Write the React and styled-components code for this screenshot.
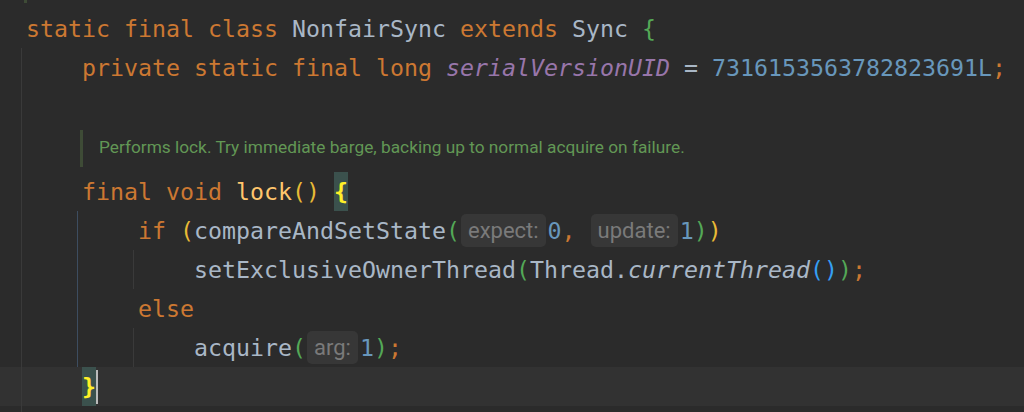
import React from "react";
import styled, { createGlobalStyle } from "styled-components";

const GlobalStyle = createGlobalStyle`
  html, body {
    margin: 0;
    padding: 0;
    background: #2b2b2b;
  }
  body {
    overflow: hidden;
  }
`;

const palette = {
  kw: "#cc7832",
  text: "#a9b7c6",
  field: "#9876aa",
  num: "#6897bb",
  decl: "#ffc66d",
  gold: "#e8ba36",
  green: "#54a857",
  blue: "#359ff4"
};

const guideColor = {
  plain: "#3a3a3a",
  active: "#3d4d60"
};

const Editor = styled.div`
  width: 1024px;
  height: 412px;
  overflow: hidden;
  background: #2b2b2b;
  display: flex;
  flex-direction: column;
  font-family: "DejaVu Sans Mono", "Liberation Mono", monospace;
  font-size: 23.25px;
`;

const Row = styled.div`
  display: flex;
  align-items: stretch;
  flex-shrink: 0;
  height: ${props => props.$height}px;
  padding-left: 21px;
  background: ${props => (props.$current ? "#323232" : "transparent")};
`;

const Filler = styled(Row)`
  flex: 1;
`;

const IndentCell = styled.span`
  width: 56px;
  flex-shrink: 0;
  box-sizing: border-box;
  border-left: 1px solid
    ${props => (props.$guide ? guideColor[props.$guide] : "transparent")};
`;

const Code = styled.span`
  display: flex;
  align-items: center;
  margin-left: 5px;
  white-space: pre;
  line-height: 39px;
`;

const Token = styled.span`
  color: ${props => palette[props.$kind]};
  font-style: ${props => (props.$italic ? "italic" : "normal")};
`;

const MatchedBrace = styled.span`
  align-self: stretch;
  display: flex;
  align-items: center;
  background: #3b514d;
  color: #ffef28;
  font-weight: bold;
`;

const Caret = styled.span`
  width: 2px;
  height: 34px;
  background: #bbbbbb;
`;

const Hint = styled.span`
  display: inline-flex;
  align-items: center;
  height: 33px;
  padding: 0 7px;
  margin: 0 2px 0 1px;
  border-radius: 5px;
  background: #373737;
  color: #7a7a7a;
  font-family: Roboto, "Noto Sans", sans-serif;
  font-size: 22px;
  line-height: 1;
`;

const DocTail = styled.span`
  width: 3px;
  height: 3px;
  margin-left: 3px;
  background: #3e4b36;
`;

const DocBlock = styled.div`
  display: flex;
  align-items: center;
`;

const DocBar = styled.span`
  width: 3px;
  height: 37px;
  margin: 0 16px 1px 3px;
  background: #3e4b36;
`;

const DocText = styled.span`
  padding-bottom: 4px;
  font-family: Roboto, "Noto Sans", sans-serif;
  font-size: 17.3px;
  color: #629755;
`;

// one entry per editor line: guides per indent level, then tokens
const lines = [
  {
    guides: [],
    tokens: [
      ["kw", "static final class "],
      ["text", "NonfairSync "],
      ["kw", "extends "],
      ["text", "Sync "],
      ["green", "{"]
    ]
  },
  {
    guides: ["plain"],
    tokens: [
      ["kw", "private static final long "],
      ["field", "serialVersionUID", true],
      ["text", " = "],
      ["num", "7316153563782823691L"],
      ["kw", ";"]
    ]
  },
  { guides: ["plain"], tokens: [] },
  { doc: "Performs lock. Try immediate barge, backing up to normal acquire on failure." },
  {
    guides: ["plain"],
    tokens: [
      ["kw", "final void "],
      ["decl", "lock"],
      ["gold", "()"],
      ["text", " "],
      ["brace", "{"]
    ]
  },
  {
    guides: ["plain", "active"],
    tokens: [
      ["kw", "if "],
      ["gold", "("],
      ["text", "compareAndSetState"],
      ["green", "("],
      ["hint", "expect:"],
      ["num", "0"],
      ["kw", ", "],
      ["hint", "update:"],
      ["num", "1"],
      ["green", ")"],
      ["gold", ")"]
    ]
  },
  {
    guides: ["plain", "active", "plain"],
    tokens: [
      ["text", "setExclusiveOwnerThread"],
      ["green", "("],
      ["text", "Thread."],
      ["text", "currentThread", true],
      ["blue", "()"],
      ["green", ")"],
      ["kw", ";"]
    ]
  },
  {
    guides: ["plain", "active"],
    tokens: [["kw", "else"]]
  },
  {
    guides: ["plain", "active", "plain"],
    tokens: [
      ["text", "acquire"],
      ["green", "("],
      ["hint", "arg:"],
      ["num", "1"],
      ["green", ")"],
      ["kw", ";"]
    ]
  },
  {
    guides: ["plain"],
    current: true,
    tokens: [["brace", "}"], ["caret", ""]]
  }
];

const renderToken = ([kind, value, italic], i) => {
  if (kind === "hint") return <Hint key={i}>{value}</Hint>;
  if (kind === "brace") return <MatchedBrace key={i}>{value}</MatchedBrace>;
  if (kind === "caret") return <Caret key={i} />;
  return (
    <Token key={i} $kind={kind} $italic={italic}>
      {value}
    </Token>
  );
};

const CodeLine = ({ line }) => {
  if (line.doc) {
    return (
      <Row $height={46}>
        <IndentCell $guide="plain" />
        <DocBlock>
          <DocBar />
          <DocText>{line.doc}</DocText>
        </DocBlock>
      </Row>
    );
  }
  return (
    <Row $height={39} $current={line.current}>
      {line.guides.map((g, i) => (
        <IndentCell key={i} $guide={g} />
      ))}
      <Code>{line.tokens.map(renderToken)}</Code>
    </Row>
  );
};

const App = () => (
  <>
    <GlobalStyle />
    <Editor>
      <Row $height={9}>
        <DocTail />
      </Row>
      {lines.map((line, i) => (
        <CodeLine key={i} line={line} />
      ))}
      <Filler $height={6}>
        <IndentCell $guide="plain" />
      </Filler>
    </Editor>
  </>
);

export default App;
